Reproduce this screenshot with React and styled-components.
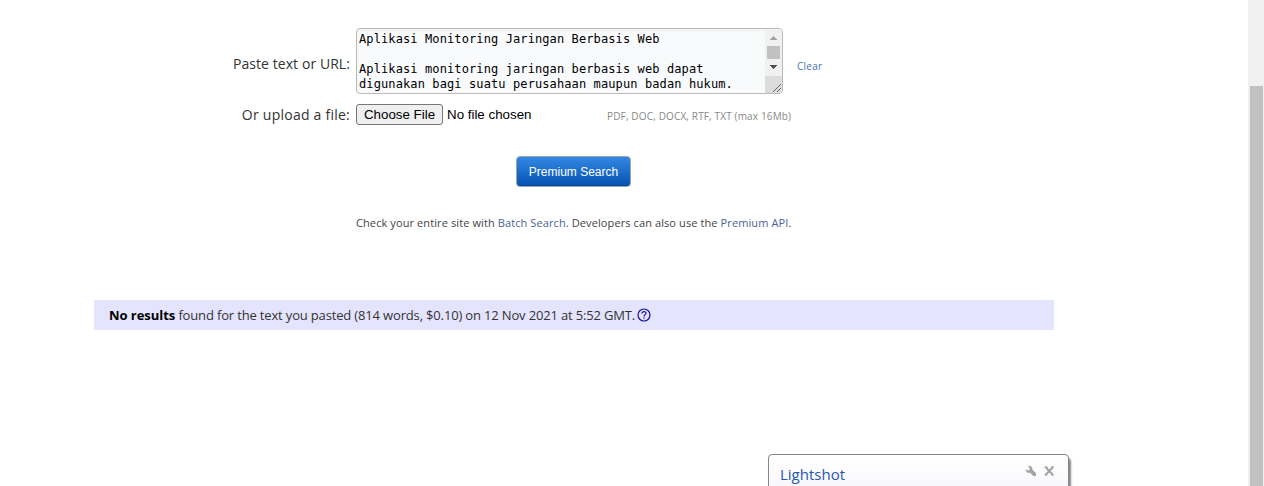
import React from 'react';
import styled, { createGlobalStyle } from 'styled-components';

const Global = createGlobalStyle`
  * { box-sizing: border-box; }
  html, body { margin: 0; padding: 0; background: #fff; overflow: hidden; }
`;

const Page = styled.div`
  position: relative;
  display: flex;
  justify-content: space-between;
  height: 486px;
  overflow: hidden;
  font-family: 'Open Sans', sans-serif;
  color: #333;
`;

const Main = styled.main`
  width: 960px;
  margin-left: 94px;
  padding-top: 28px;
`;

const Row = styled.div`
  display: flex;
  align-items: center;
  height: ${p => p.$height}px;
  margin-bottom: ${p => p.$gap || 0}px;
`;

const Label = styled.label`
  width: 256px;
  margin-right: 6px;
  padding-top: ${p => p.$drop || 0}px;
  text-align: right;
  font-size: 14px;
  line-height: 20px;
  letter-spacing: ${p => p.$spacing || 0}px;
  white-space: nowrap;
`;

const TextBox = styled.div`
  display: flex;
  width: 427px;
  height: 66px;
  border: 1px solid #bbb;
  border-radius: 4px;
  overflow: hidden;
  background: #f8fafc;
  box-shadow: inset 0 1px 3px #eceeef;
`;

const Pasted = styled.pre`
  flex: 1;
  margin: 0;
  padding: 3px 2px;
  font-family: 'DejaVu Sans Mono', monospace;
  font-size: 12px;
  line-height: 15px;
  letter-spacing: 0.107px;
  color: #000;
`;

const BoxScroll = styled.div`
  width: 17px;
  background: #f1f1f1;
  svg { display: block; }
`;

const Clear = styled.a`
  margin: 9px 0 0 14px;
  font-size: 10px;
  line-height: 14px;
  letter-spacing: 0.25px;
  color: #4a6fb3;
`;

const FileButton = styled.button`
  width: 87px;
  height: 21px;
  padding: 0;
  border: 1px solid #767676;
  border-radius: 3px;
  background: #efefef;
  color: #000;
  font: 13.333px/18px 'Liberation Sans', sans-serif;
`;

const FileName = styled.span`
  width: 160px;
  margin-left: 4px;
  font: 13.333px/20px 'Liberation Sans', sans-serif;
  color: #000;
`;

const Formats = styled.span`
  padding-top: 2px;
  font-size: 10px;
  line-height: 14px;
  letter-spacing: 0.15px;
  color: #888;
  white-space: nowrap;
`;

const SearchButton = styled.button`
  display: block;
  width: 115px;
  height: 31px;
  margin-left: 422px;
  padding: 0;
  border: 1px solid #9ba3b0;
  border-radius: 4px;
  background: linear-gradient(#3388e4, #0453b0);
  box-shadow: inset 0 -1px 0 #034a9f;
  color: #fff;
  font: 12px/28px 'Liberation Sans', sans-serif;
`;

const Note = styled.p`
  margin: 28px 0 0 262px;
  font-size: 11px;
  line-height: 16px;
  letter-spacing: 0.1px;
  color: #444;
  white-space: nowrap;
  a { color: #4a6396; }
`;

const Result = styled.div`
  display: flex;
  align-items: center;
  height: 30px;
  margin-top: 69px;
  padding-left: 15px;
  background: #e4e4fe;
  font-size: 13px;
  letter-spacing: -0.158px;
  white-space: pre;
  b { color: #000; letter-spacing: -0.05px; }
  svg { margin: -1px 0 0 2px; }
`;

const PageScroll = styled.div`
  width: 16px;
  padding: 86px 1px 0 2px;
  background: #f0f0f0;
`;

const Thumb = styled.div`
  height: 400px;
  background: #c1c1c1;
`;

const Popup = styled.aside`
  position: absolute;
  left: 768px;
  top: 454px;
  display: flex;
  width: 301px;
  height: 60px;
  padding: 9px 13px 0 11px;
  border: 1px solid #858585;
  border-radius: 4px;
  background: linear-gradient(#fff, #f8f8fc 32px);
  box-shadow: 2px 4px 2px #888;
  svg { margin-top: 1px; }
`;

const PopupTitle = styled.span`
  flex: 1;
  font-size: 15px;
  line-height: 20px;
  color: #2857b8;
`;

const UpDown = () => (
  <svg width="17" height="64" shapeRendering="crispEdges">
    <path d="M5 11h7v-1h-1v-1h-1v-1h-1v-1h-1v1h-1v1h-1v1h-1z" fill="#a3a3a3" />
    <rect x="2" y="17" width="13" height="13" fill="#c1c1c1" />
    <path d="M5 36h7v1h-1v1h-1v1h-1v1h-1v-1h-1v-1h-1v-1h-1z" fill="#505050" />
    <rect y="47" width="17" height="17" fill="#dcdcdc" />
    <path d="M8 63l8-8M12 63l4-4" stroke="#666" strokeWidth="1" />
  </svg>
);

export default function App() {
  return (
    <Page>
      <Global />
      <Main>
        <Row $height={66} $gap={10}>
          <Label $drop={5} $spacing={0.07}>Paste text or URL:</Label>
          <TextBox>
            <Pasted>{'Aplikasi Monitoring Jaringan Berbasis Web\n\nAplikasi monitoring jaringan berbasis web dapat\ndigunakan bagi suatu perusahaan maupun badan hukum.'}</Pasted>
            <BoxScroll><UpDown /></BoxScroll>
          </TextBox>
          <Clear>Clear</Clear>
        </Row>
        <Row $height={21} $gap={31}>
          <Label $spacing={0.24}>Or upload a file:</Label>
          <FileButton>Choose File</FileButton>
          <FileName>No file chosen</FileName>
          <Formats>PDF, DOC, DOCX, RTF, TXT (max 16Mb)</Formats>
        </Row>
        <SearchButton>Premium Search</SearchButton>
        <Note>Check your entire site with <a>Batch Search</a>. Developers can also use the <a>Premium API</a>.</Note>
        <Result>
          <b>No results</b> found for the text you pasted (814 words, $0.10) on 12 Nov 2021 at 5:52 GMT.
          <svg width="14" height="14" viewBox="0 0 14 14" fill="none" stroke="#1111a8">
            <circle cx="7" cy="7" r="6" strokeWidth="1.2" />
            <path d="M5 5.500C5 3 9 3 9 5.300C9 6.700 7 6.600 7 8.400M7 9.500v1.200" strokeWidth="1.2" />
          </svg>
        </Result>
      </Main>
      <PageScroll><Thumb /></PageScroll>
      <Popup>
        <PopupTitle>Lightshot</PopupTitle>
        <svg width="31" height="12" viewBox="0 0 31 12">
          <path d="M4 .8C6.500 .3 8.800 2 8.300 4.500L12 8.200V11H9.300L6 7.800C3.500 8.500 1.200 6.500 1.600 4L3.700 5.500L5.500 5V3z" fill="#a3a3a3" />
          <path d="M21.500 2l7.500 8M29 2l-7.500 8" stroke="#a3a3a3" strokeWidth="2" />
          <path d="M20.500 2h3M27 2h3M20.500 10h3M27 10h3" stroke="#a3a3a3" strokeWidth="1" />
        </svg>
      </Popup>
    </Page>
  );
}
